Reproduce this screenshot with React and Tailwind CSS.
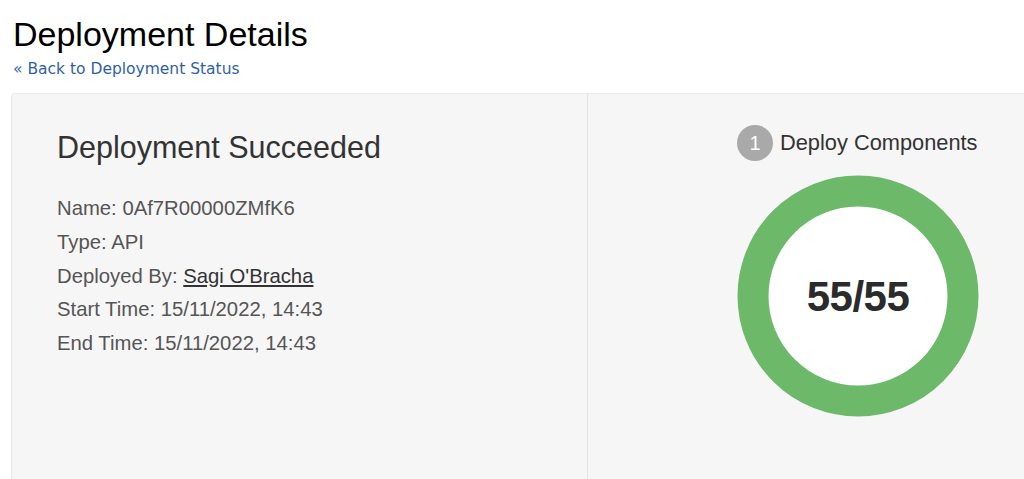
import React from 'react';

const details = [
    { label: 'Name', value: '0Af7R00000ZMfK6' },
    { label: 'Type', value: 'API' },
    { label: 'Deployed By', value: "Sagi O'Bracha", link: true },
    { label: 'Start Time', value: '15/11/2022, 14:43' },
    { label: 'End Time', value: '15/11/2022, 14:43' },
];

function Donut({ done, total }) {
    return (
        <div className="relative w-[242px] h-[242px]">
            <svg width="242" height="242" viewBox="0 0 242 242">
                <circle cx="121" cy="121" r="105" fill="#ffffff" stroke="#6cb96a" strokeWidth="31" />
            </svg>
            <div className="absolute inset-0 flex items-center justify-center text-[42px] font-bold text-[#2b2b2b] tracking-[-0.5px]">
                {done}/{total}
            </div>
        </div>
    );
}

export default function App() {
    return (
        <div className="h-[479px] overflow-hidden bg-white" style={{ fontFamily: '"Liberation Sans", Arial, sans-serif' }}>
            <div className="pl-[13px] pt-[14px]">
                <h1 className="text-[34px] leading-[40px] text-black">Deployment Details</h1>
                <a
                    href="#"
                    className="block text-[15.5px] leading-[20px] text-[#2f5fa8] mt-[5px]"
                    style={{ fontFamily: '"DejaVu Sans", Verdana, sans-serif' }}
                >
                    &laquo; Back to Deployment Status
                </a>
            </div>

            <div className="ml-[11px] mt-[14px] flex h-[400px] bg-[#f6f6f6] border-l border-t border-[#e9e9e9] rounded-tl-[4px]">
                {/* left column */}
                <div className="w-[576px] shrink-0 border-r border-[#e3e3e3] pl-[45px] pt-[35px]">
                    <h2 className="text-[30.5px] leading-[36px] text-[#333]">Deployment Succeeded</h2>
                    <div className="mt-[32px] flex flex-col gap-[10.25px] text-[20.3px] leading-[23.5px] text-[#555]">
                        {details.map((d) => (
                            <div key={d.label}>
                                {d.label}:{' '}
                                {d.link ? (
                                    <a href="#" className="underline text-[#333]">{d.value}</a>
                                ) : (
                                    d.value
                                )}
                            </div>
                        ))}
                    </div>
                </div>

                {/* right column */}
                <div className="flex-1 flex flex-col items-start pt-[31px] pl-[149px]">
                    <div className="flex items-center gap-[7px]">
                        <span className="w-[36px] h-[36px] rounded-full bg-[#a9a9a9] text-white text-[20px] flex items-center justify-center">
                            1
                        </span>
                        <span className="text-[21.8px] text-[#333]">Deploy Components</span>
                    </div>
                    <div className="mt-[14px]">
                        <Donut done={55} total={55} />
                    </div>
                </div>
            </div>
        </div>
    );
}
